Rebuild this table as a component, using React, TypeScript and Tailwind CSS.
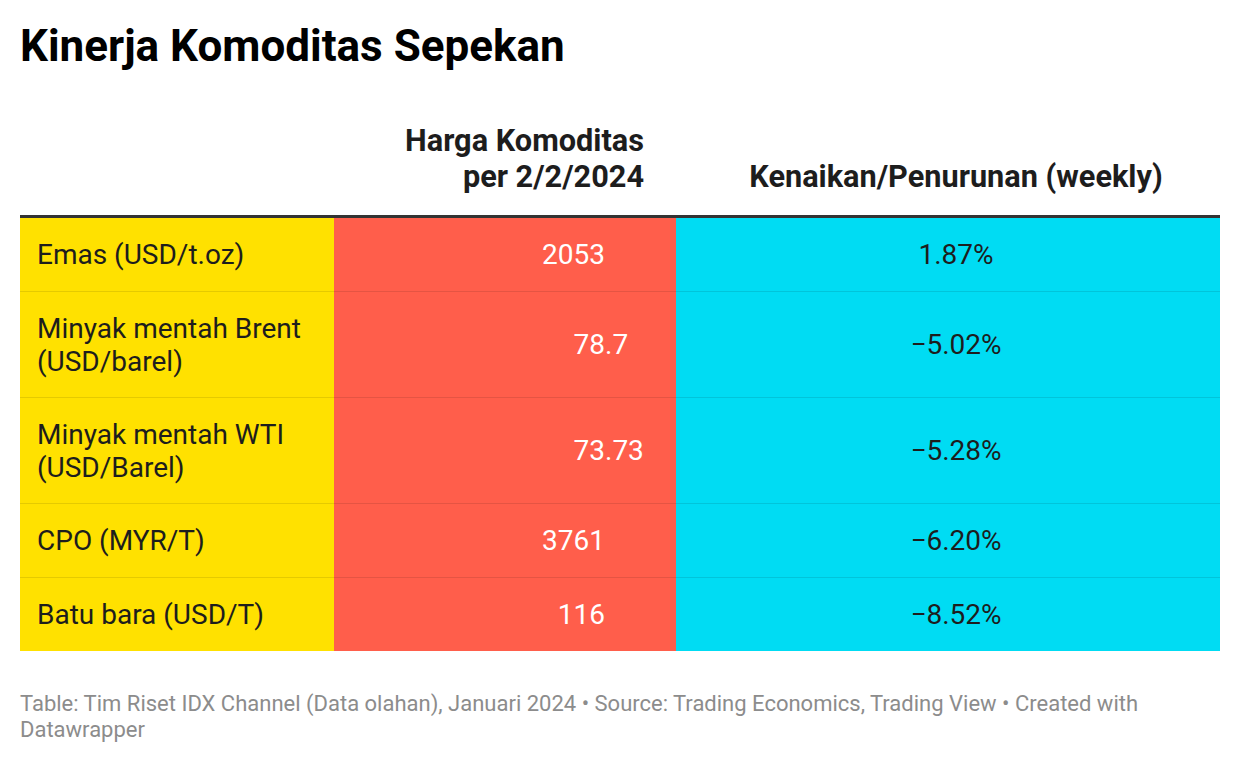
const rows = [
  { name: ["Emas (USD/t.oz)"], int: "2053", frac: "", change: "1.87%" },
  { name: ["Minyak mentah Brent", "(USD/barel)"], int: "78", frac: ".7", change: "−5.02%" },
  { name: ["Minyak mentah WTI", "(USD/Barel)"], int: "73", frac: ".73", change: "−5.28%" },
  { name: ["CPO (MYR/T)"], int: "3761", frac: "", change: "−6.20%" },
  { name: ["Batu bara (USD/T)"], int: "116", frac: "", change: "−8.52%" },
];

const App = () => {
  return (
    <div className="bg-white w-[1240px] h-[762px] px-5 font-['Roboto',sans-serif] text-[#1d1d1d]">
      <h1 className="pt-[24px] text-[44px] leading-[44px] font-bold text-black">Kinerja Komoditas Sepekan</h1>

      {/* header */}
      <div className="mt-[55px] grid grid-cols-[314px_342px_544px] items-end border-b-[3px] border-[#333] pb-5 text-[30.7px] leading-[36px] font-bold text-[#1d1d1d]">
        <div />
        <div className="text-right pr-8">
          Harga Komoditas
          <br />
          per 2/2/2024
        </div>
        <div className="text-center pl-4">Kenaikan/Penurunan (weekly)</div>
      </div>

      {/* body */}
      <div className="text-[28px] leading-[33px]">
        {rows.map((r, i) => (
          <div key={i} className="grid grid-cols-[314px_342px_544px]">
            <div
              className={`bg-[#ffe100] px-[17px] ${r.name.length > 1 ? "py-[19.5px]" : "py-5"} ${i > 0 ? "border-t border-black/10" : ""}`}
            >
              {r.name.map((n, j) => (
                <div key={j}>{n}</div>
              ))}
            </div>
            <div className={`bg-[#ff5e4b] pr-8 flex items-center justify-end text-white ${i > 0 ? "border-t border-black/10" : ""}`}>
              <span className="text-right">{r.int}</span>
              <span className="w-[39px]">{r.frac}</span>
            </div>
            <div className={`bg-[#00dcf3] pl-4 flex items-center justify-center ${i > 0 ? "border-t border-black/10" : ""}`}>
              {r.change}
            </div>
          </div>
        ))}
      </div>

      <p className="mt-[40px] text-[22px] leading-[26px] text-[#8c8c8c]">
        Table: Tim Riset IDX Channel (Data olahan), Januari 2024 • Source: Trading Economics, Trading View • Created with Datawrapper
      </p>
    </div>
  );
};

export default App;
